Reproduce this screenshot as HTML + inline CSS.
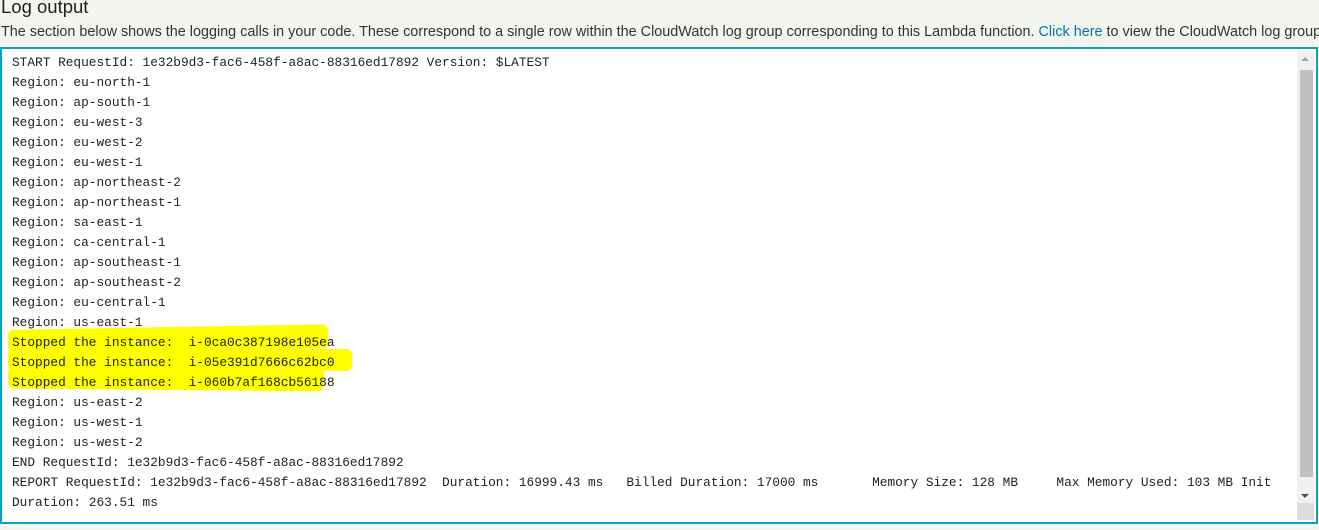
<!DOCTYPE html>
<html><head><style>
body{margin:0;background:#f2f6ef;width:1319px;height:530px;overflow:hidden;font-family:"Liberation Sans",Arial,sans-serif;position:relative}
h1{position:absolute;left:1px;top:-4px;margin:0;font-weight:normal;font-size:18.5px;color:#222}
.d{position:absolute;left:1px;top:24px;font-size:14.4px;color:#333;white-space:nowrap}
.d a{color:#0073bb;text-decoration:none}
.box{position:absolute;left:0;top:47px;width:1314px;height:473px;border:2px solid #0aa0c8;background:#fff}
pre{position:absolute;left:10px;top:4px;margin:0;font-family:"Liberation Mono",monospace;font-size:12.8px;line-height:20px;color:#222}
.hl{position:absolute;background:#ffff00;border-radius:6px}
.sb{position:absolute;right:2px;top:2px;width:17px;height:469px;background:#f0f0f0}
.th{position:absolute;left:3px;top:19px;width:13px;height:407px;background:#c1c1c1}
.up{position:absolute;left:4px;top:6px;border:4px solid transparent;border-bottom:4px solid #a3a3a3;border-top:0}
.dn{position:absolute;left:4px;top:443px;border:4px solid transparent;border-top:4px solid #505050;border-bottom:0}
.rz{position:absolute;left:0;bottom:0;width:17px;height:17px;background:#dcdcdc}
</style></head><body>
<h1>Log output</h1>
<div class="d">The section below shows the logging calls in your code. These correspond to a single row within the CloudWatch log group corresponding to this Lambda function. <a>Click here</a> to view the CloudWatch log group.</div>
<div class="box">
<div class="hl" style="left:6px;top:278px;width:320px;height:24px;transform:rotate(-1deg)"></div>
<div class="hl" style="left:6px;top:300px;width:344px;height:22px"></div>
<div class="hl" style="left:6px;top:319px;width:316px;height:22px;transform:rotate(0.5deg)"></div>
<pre>START RequestId: 1e32b9d3-fac6-458f-a8ac-88316ed17892 Version: $LATEST
Region: eu-north-1
Region: ap-south-1
Region: eu-west-3
Region: eu-west-2
Region: eu-west-1
Region: ap-northeast-2
Region: ap-northeast-1
Region: sa-east-1
Region: ca-central-1
Region: ap-southeast-1
Region: ap-southeast-2
Region: eu-central-1
Region: us-east-1
Stopped the instance:  i-0ca0c387198e105ea
Stopped the instance:  i-05e391d7666c62bc0
Stopped the instance:  i-060b7af168cb56188
Region: us-east-2
Region: us-west-1
Region: us-west-2
END RequestId: 1e32b9d3-fac6-458f-a8ac-88316ed17892
REPORT RequestId: 1e32b9d3-fac6-458f-a8ac-88316ed17892	Duration: 16999.43 ms	Billed Duration: 17000 ms	Memory Size: 128 MB	Max Memory Used: 103 MB	Init
Duration: 263.51 ms	</pre>
<div class="sb"><div class="up"></div><div class="th"></div><div class="dn"></div><div class="rz"></div></div>
</div>
</body></html>
